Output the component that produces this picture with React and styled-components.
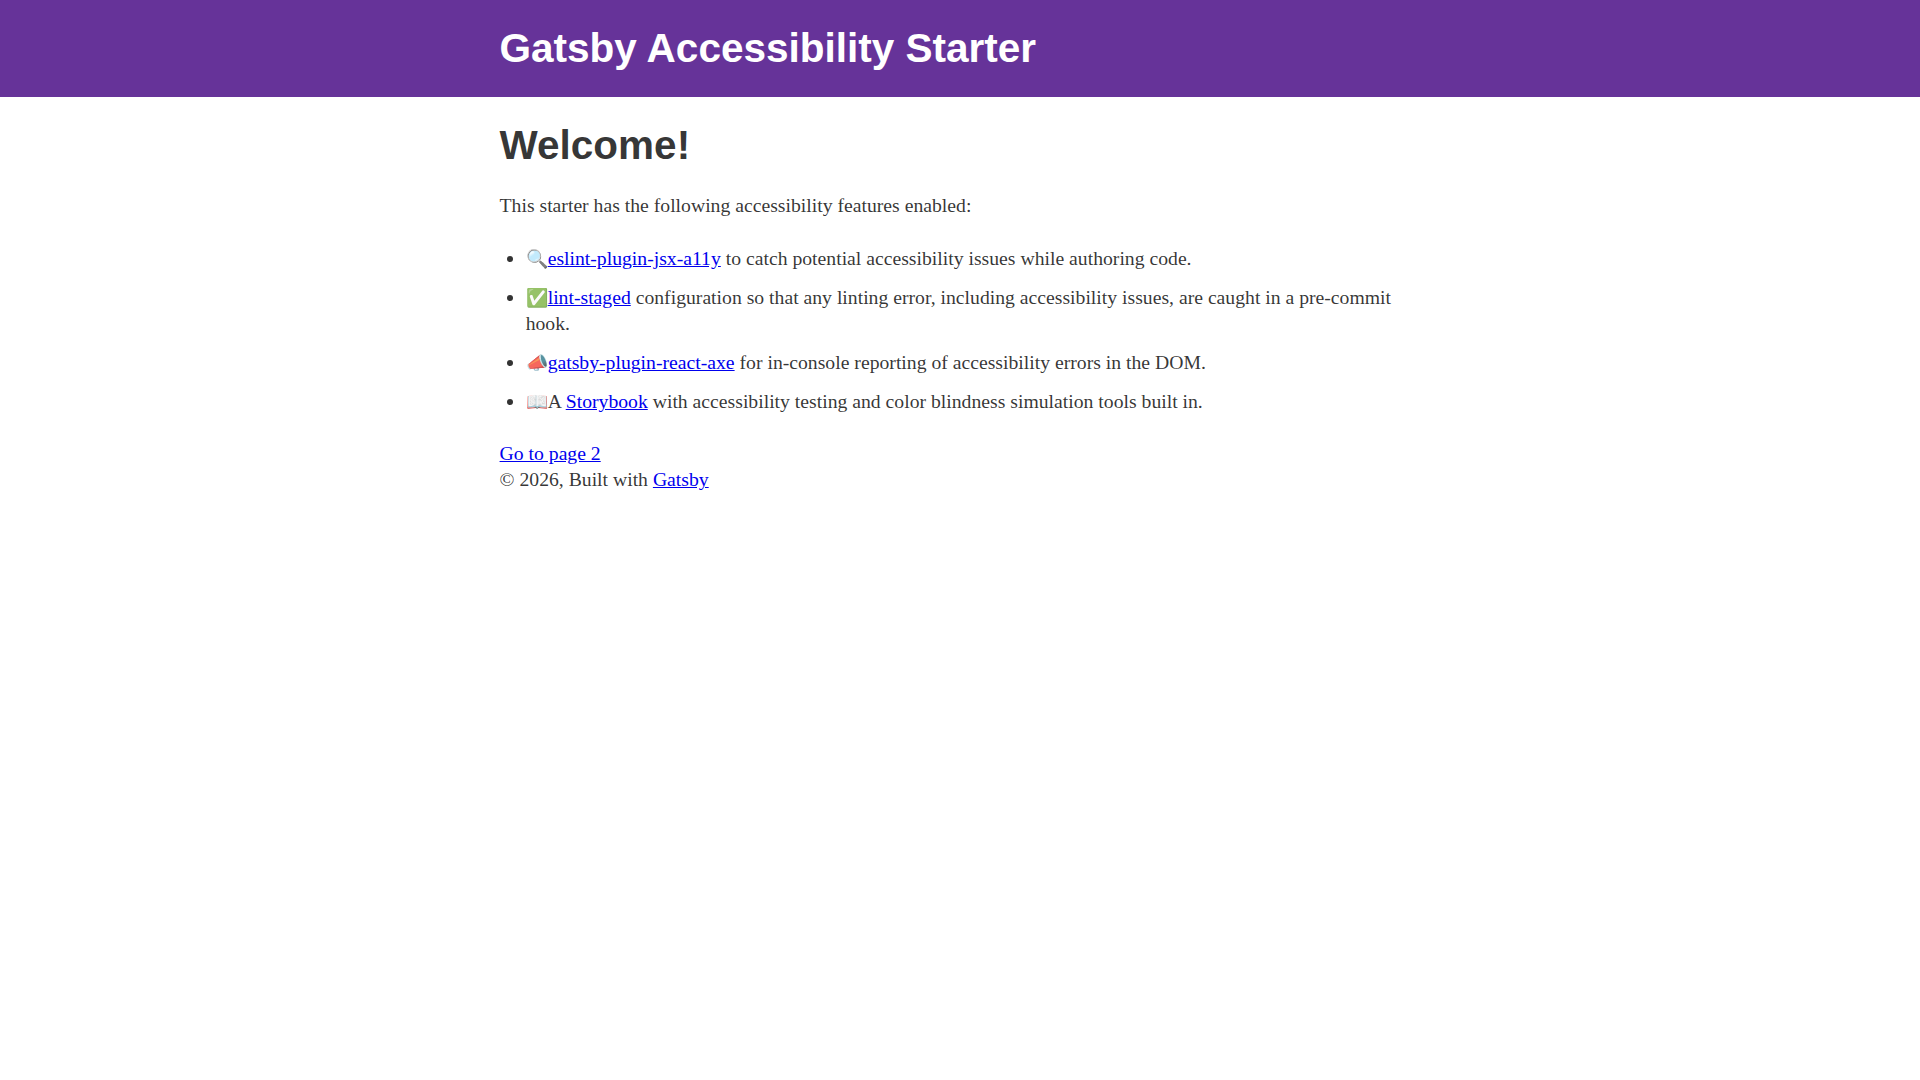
import React from "react";
import styled, { createGlobalStyle } from "styled-components";

const Global = createGlobalStyle`
  html { font-size: 18px; }
  body {
    margin: 0;
    background: #fff;
    color: rgba(0,0,0,0.8);
    font-family: "Liberation Serif", serif;
    font-size: 19.7px;
    line-height: 26.1px;
  }
  a { color: #0000ee; }
`;

const Banner = styled.header`
  background: rebeccapurple;
  margin-bottom: 26.1px;
`;
const BannerInner = styled.div`
  max-width: 960px;
  margin: 0 auto;
  padding: 26.1px 19.575px;
  box-sizing: border-box;
`;
const SiteTitle = styled.h1`
  margin: 0;
  font-family: "Liberation Sans", Arial, sans-serif;
  font-size: 40.5px;
  line-height: 44.55px;
  font-weight: 700;
  a { color: #fff; text-decoration: none; }
`;
const Main = styled.main`
  max-width: 960px;
  margin: 0 auto;
  padding: 0 19.575px 26.1px;
  box-sizing: border-box;
`;
const Heading = styled.h1`
  margin: 0 0 25.1px;
  font-family: "Liberation Sans", Arial, sans-serif;
  font-size: 40.5px;
  line-height: 44.55px;
  font-weight: 700;
`;
const Para = styled.p`
  margin: 0 0 26.1px;
`;
const List = styled.ul`
  margin: 0 0 26.1px 26.1px;
  padding: 0;
`;
const Item = styled.li`
  margin-bottom: 13.05px;
`;
const Emoji = styled.span`
  font-size: 18px;
  line-height: 1;
`;

export default function App() {
  return (
    <>
      <Global />
      <Banner>
        <BannerInner>
          <SiteTitle><a href="#home">Gatsby Accessibility Starter</a></SiteTitle>
        </BannerInner>
      </Banner>
      <Main>
        <Heading>Welcome!</Heading>
        <Para>This starter has the following accessibility features enabled:</Para>
        <List>
          <Item><Emoji>🔍</Emoji><a href="#a">eslint-plugin-jsx-a11y</a> to catch potential accessibility issues while authoring code.</Item>
          <Item><Emoji>✅</Emoji><a href="#b">lint-staged</a> configuration so that any linting error, including accessibility issues, are caught in a pre-commit hook.</Item>
          <Item><Emoji>📣</Emoji><a href="#c">gatsby-plugin-react-axe</a> for in-console reporting of accessibility errors in the DOM.</Item>
          <Item><Emoji>📖</Emoji>A <a href="#d">Storybook</a> with accessibility testing and color blindness simulation tools built in.</Item>
        </List>
        <a href="#page-2">Go to page 2</a>
        <footer>© 2026, Built with <a href="#gatsby">Gatsby</a></footer>
      </Main>
    </>
  );
}
